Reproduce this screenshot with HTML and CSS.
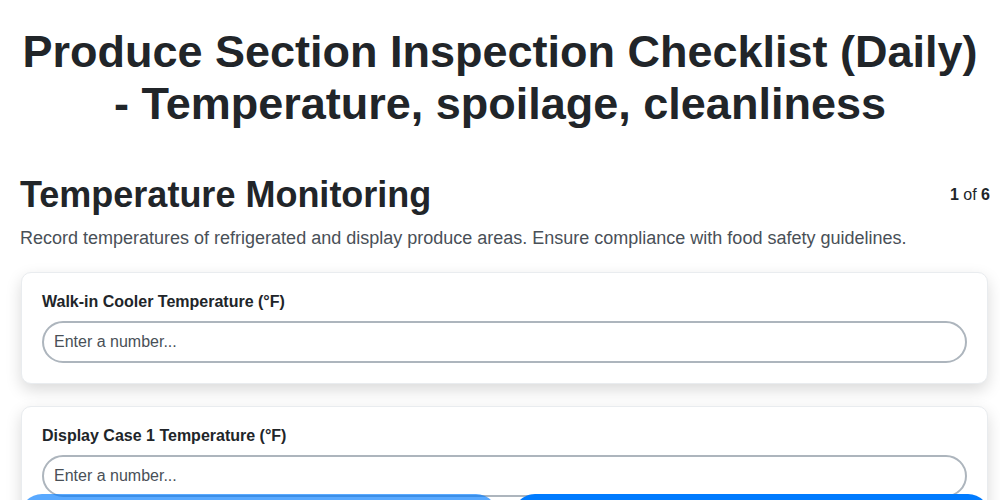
FILE: index.html
```html
<!DOCTYPE html>
<html lang="en">
<head>
    <meta charset="UTF-8">
    <meta name="viewport" content="width=device-width, initial-scale=1.0">
    <title>Produce Section Inspection Checklist</title>
    <link rel="stylesheet" href="styles.css">
</head>
<body>
    <div class="container">
        <h1>Produce Section Inspection Checklist (Daily) - Temperature, spoilage, cleanliness</h1>

        <div class="section-header">
            <h2>Temperature Monitoring</h2>
            <div class="step-counter"><strong>1</strong> of <strong>6</strong></div>
        </div>
        <p class="section-desc">Record temperatures of refrigerated and display produce areas. Ensure compliance with food safety guidelines.</p>

        <div class="field-card">
            <label class="field-label" for="walkin">Walk-in Cooler Temperature (°F)</label>
            <input id="walkin" class="field-input" type="text" placeholder="Enter a number...">
        </div>

        <div class="field-card">
            <label class="field-label" for="display1">Display Case 1 Temperature (°F)</label>
            <input id="display1" class="field-input" type="text" placeholder="Enter a number...">
        </div>

        <div class="field-card">
            <label class="field-label" for="display2">Display Case 2 Temperature (°F)</label>
            <input id="display2" class="field-input" type="text" placeholder="Enter a number...">
        </div>
    </div>

    <div class="nav-buttons">
        <button class="btn btn-prev" disabled>Previous</button>
        <button class="btn btn-next">Next</button>
    </div>
</body>
</html>
```

FILE: styles.css
```css
* {
    margin: 0;
    padding: 0;
    box-sizing: border-box;
}

body {
    font-family: 'Liberation Sans', Arial, Helvetica, sans-serif;
    background: #fff;
    color: #212529;
}

.container {
    padding: 26px 10px 80px 20px;
}

h1 {
    text-align: center;
    font-size: 45px;
    line-height: 52px;
    font-weight: bold;
    color: #212529;
    margin: 0 10px 44px 0;
}

.section-header {
    display: flex;
    align-items: center;
    justify-content: space-between;
}

h2 {
    font-size: 36px;
    line-height: 41px;
    font-weight: bold;
    color: #212529;
}

.step-counter {
    font-size: 16px;
    color: #212529;
}

.section-desc {
    font-size: 18px;
    line-height: 27px;
    color: #495057;
    margin-top: 10px;
    margin-bottom: 20px;
}

.field-card {
    background: #fff;
    border: 1px solid #e9ecef;
    border-radius: 10px;
    padding: 20px;
    margin: 0 2px 22px 1px;
    box-shadow: 0 6px 16px rgba(0, 0, 0, 0.15);
}

.field-label {
    display: block;
    font-size: 16px;
    font-weight: bold;
    line-height: 18px;
    margin-bottom: 10px;
    color: #212529;
}

.field-input {
    width: 100%;
    height: 42px;
    padding: 0 10px;
    border: 2px solid #adb5bd;
    border-radius: 21px;
    font-family: inherit;
    font-size: 16px;
    color: #212529;
    background: #fff;
    outline: none;
}

.field-input::placeholder {
    color: #495057;
}

.nav-buttons {
    position: fixed;
    left: 20px;
    right: 10px;
    top: 494px;
    display: flex;
    gap: 15px;
}

.btn {
    flex: 1;
    height: 46px;
    border: none;
    border-radius: 22px;
    font-family: inherit;
    font-size: 16px;
    font-weight: bold;
    color: #fff;
    background: #007bff;
}

.btn-prev {
    opacity: 0.65;
}
```
